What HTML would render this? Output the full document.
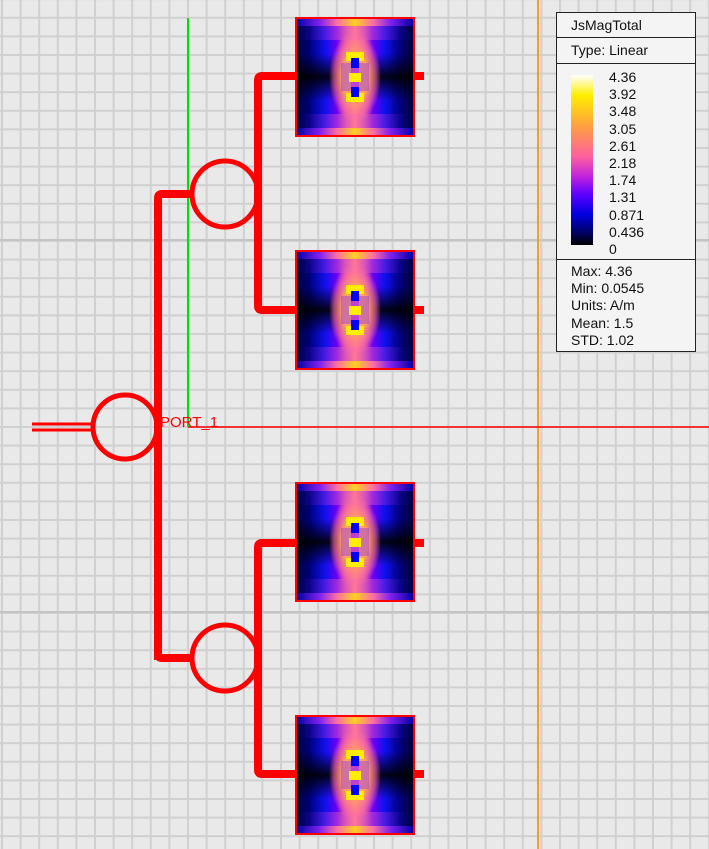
<!DOCTYPE html>
<html><head><meta charset="utf-8"><style>
body{margin:0;width:709px;height:849px;overflow:hidden;background:#e9e9e9;font-family:"Liberation Sans",sans-serif}
svg{position:absolute;left:0;top:0}
#leg{position:absolute;left:556px;top:12px;width:138px;height:338px;border:1px solid #222;background:#f4f4f4;font-size:14px;color:#111}
#leg .r{position:absolute;left:0;width:138px;border-bottom:1px solid #222}
#leg .t{position:absolute;left:14px;line-height:17px}
</style></head><body>
<svg width="709" height="849" viewBox="0 0 709 849">
<defs>
<pattern id="g" width="18.6" height="18.6" patternUnits="userSpaceOnUse" x="1" y="-1.8">
<path d="M1 0V18.6M0 1H18.6" stroke="#d0d0d0" stroke-width="2" fill="none"/>
</pattern>
<linearGradient id="h" x1="0" x2="1" y1="0" y2="0">
<stop offset="0" stop-color="#000030"/><stop offset=".12" stop-color="#000080"/><stop offset=".25" stop-color="#1010f0"/><stop offset=".35" stop-color="#7000f0"/><stop offset=".42" stop-color="#e050b0"/><stop offset=".5" stop-color="#ff9070"/><stop offset=".58" stop-color="#e050b0"/><stop offset=".65" stop-color="#7000f0"/><stop offset=".75" stop-color="#1010f0"/><stop offset=".88" stop-color="#000080"/><stop offset="1" stop-color="#000030"/>
</linearGradient>
<linearGradient id="v" x1="0" x2="0" y1="0" y2="1">
<stop offset="0" stop-color="#000" stop-opacity="0"/><stop offset=".3" stop-color="#000" stop-opacity="0"/><stop offset=".5" stop-color="#000" stop-opacity=".9"/><stop offset=".7" stop-color="#000" stop-opacity="0"/><stop offset="1" stop-color="#000" stop-opacity="0"/>
</linearGradient>
<linearGradient id="band" x1="0" x2="1">
<stop offset="0" stop-color="#0000a0"/><stop offset=".2" stop-color="#8020f0"/><stop offset=".35" stop-color="#ff70a0"/><stop offset=".5" stop-color="#ffd020"/><stop offset=".65" stop-color="#ff70a0"/><stop offset=".8" stop-color="#8020f0"/><stop offset="1" stop-color="#0000a0"/>
</linearGradient>
<linearGradient id="band2" x1="0" x2="1">
<stop offset="0" stop-color="#0000a0" stop-opacity="0"/><stop offset=".3" stop-color="#a030e0" stop-opacity=".6"/><stop offset=".5" stop-color="#ff70a0" stop-opacity=".8"/><stop offset=".7" stop-color="#a030e0" stop-opacity=".6"/><stop offset="1" stop-color="#0000a0" stop-opacity="0"/>
</linearGradient>
<radialGradient id="c" cx=".5" cy=".5" r=".5">
<stop offset="0" stop-color="#ffb060"/><stop offset=".5" stop-color="#ffa060"/><stop offset=".8" stop-color="#ff70a0" stop-opacity=".6"/><stop offset="1" stop-color="#ff70a0" stop-opacity="0"/>
</radialGradient>
<g id="p">
<rect x="0" y="0" width="118" height="118" fill="url(#h)"/>
<rect x="0" y="0" width="118" height="118" fill="url(#v)"/>
<rect x="0" y="8" width="118" height="14" fill="url(#band2)"/>
<rect x="0" y="96" width="118" height="14" fill="url(#band2)"/>
<rect x="0" y="0" width="118" height="8" fill="url(#band)"/>
<rect x="0" y="110" width="118" height="8" fill="url(#band)"/>
<ellipse cx="59" cy="59" rx="26" ry="46" fill="url(#c)"/>
<rect x="45" y="45" width="28" height="28" fill="#a040e0" opacity=".5"/>
<rect x="50" y="34" width="18" height="9" fill="#ffee00"/>
<rect x="50" y="75" width="18" height="9" fill="#ffee00"/>
<rect x="53" y="55" width="12" height="9" fill="#ffee00"/>
<rect x="55" y="40" width="8" height="10" fill="#0000ff"/>
<rect x="55" y="69" width="8" height="10" fill="#0000ff"/>
<rect x="55" y="50" width="8" height="5" fill="#c040d0"/>
<rect x="55" y="64" width="8" height="5" fill="#c040d0"/>
<rect x="0" y="0" width="118" height="118" fill="none" stroke="#f00" stroke-width="2"/>
</g>
</defs>
<rect width="709" height="849" fill="url(#g)"/>
<line x1="0" y1="240" x2="709" y2="240" stroke="#c4c4c4" stroke-width="2"/>
<line x1="0" y1="612" x2="709" y2="612" stroke="#c4c4c4" stroke-width="2"/>
<line x1="538" y1="0" x2="538" y2="849" stroke="#f5a020" stroke-width="2"/>
<line x1="188" y1="427" x2="709" y2="427" stroke="#f00" stroke-width="1.5"/>
<line x1="188" y1="18" x2="188" y2="427" stroke="#00e000" stroke-width="2"/>
<g stroke="#f00" fill="none">
<path d="M158 660V198Q158 194 162 194H192" stroke-width="8"/>
<path d="M158 654Q158 658 162 658H192" stroke-width="8"/>
<path d="M296 76H262Q258 76 258 80V306Q258 310 262 310H296" stroke-width="8"/>
<path d="M296 543H262Q258 543 258 547V770Q258 774 262 774H296" stroke-width="8"/>
<path d="M414 76H424M414 310H424M414 543H424M414 774H424" stroke-width="8"/>
<circle cx="225" cy="194" r="33" stroke-width="5"/>
<circle cx="225" cy="658" r="33" stroke-width="5"/>
<circle cx="125" cy="427" r="32" stroke-width="5"/>
<path d="M32 424H93M32 430H93" stroke-width="3"/>
</g>
<use href="#p" x="296" y="18"/>
<use href="#p" x="296" y="251"/>
<use href="#p" x="296" y="483"/>
<use href="#p" x="296" y="716"/>
<text x="160" y="427" font-family="Liberation Sans" font-size="15" fill="#f00">PORT_1</text>
</svg>
<div id="leg">
<div class="r" style="top:0;height:24px"><div class="t" style="top:4px">JsMagTotal</div></div>
<div class="r" style="top:25px;height:25px"><div class="t" style="top:4px">Type: Linear</div></div>
<div class="r" style="top:51px;height:195px">
<div style="position:absolute;left:14px;top:11px;width:22px;height:170px;background:linear-gradient(#fff,#ffee00 12%,#ffa040 30%,#ff60a0 48%,#c020e0 60%,#6000ff 70%,#0000e0 82%,#000060 93%,#000)"></div>
<div class="t" style="left:52px;top:5px;line-height:17.2px">4.36<br>3.92<br>3.48<br>3.05<br>2.61<br>2.18<br>1.74<br>1.31<br>0.871<br>0.436<br>0</div>
</div>
<div class="t" style="top:250px;line-height:17.2px">Max: 4.36<br>Min: 0.0545<br>Units: A/m<br>Mean: 1.5<br>STD: 1.02</div>
</div>
</body></html>
